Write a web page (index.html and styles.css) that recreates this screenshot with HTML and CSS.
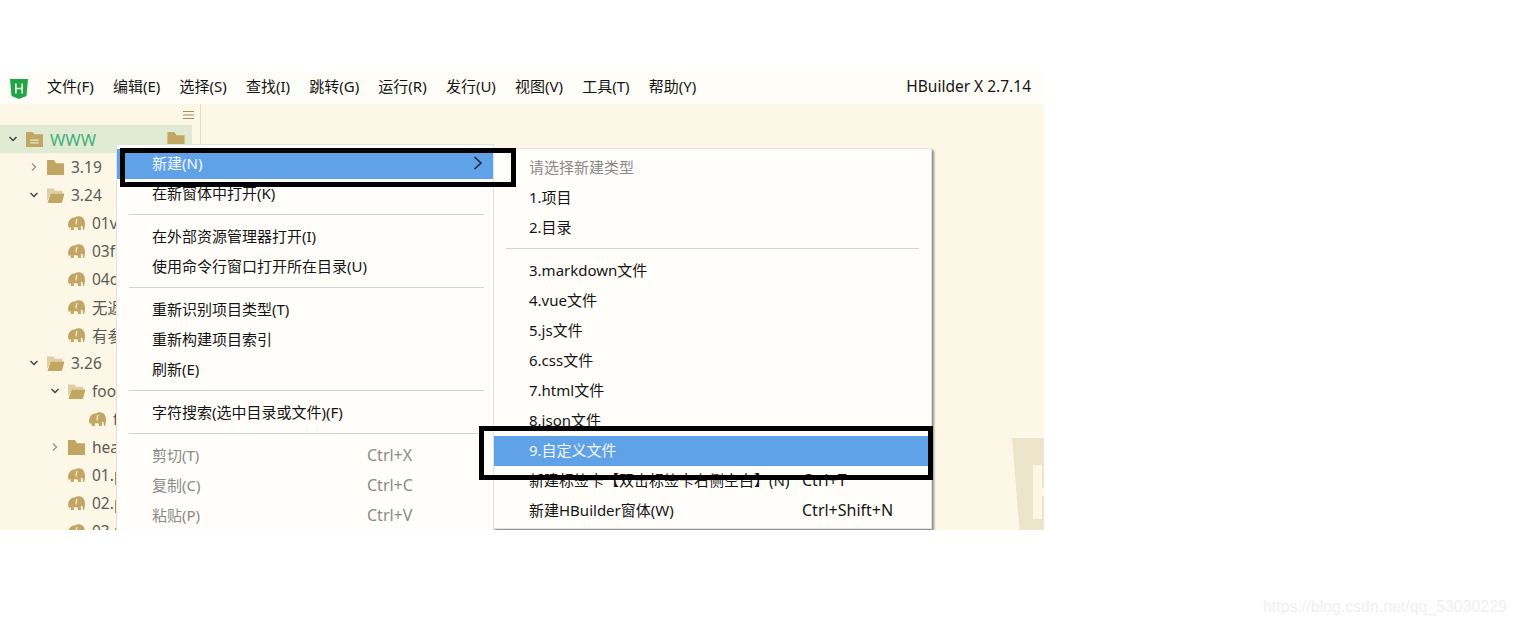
FILE: index.html
```html
<!DOCTYPE html>
<html lang="zh-CN">
<head>
<meta charset="utf-8">
<title>HBuilder X</title>
<link rel="stylesheet" href="styles.css">
</head>
<body>
<svg class="defs" width="0" height="0" aria-hidden="true">
  <symbol id="folder" viewBox="0 0 16 14"><path d="M0 0h6.500l2 3H16v11H0z"/></symbol>
  <symbol id="folder-open" viewBox="0 0 16 14"><path d="M0 .5h6l2 2h6.500v2.500H3.500L1 11H0z" opacity=".5"/><path d="M3.500 5H16.500L14 14H.5z"/></symbol>
  <symbol id="project" viewBox="0 0 16 14"><path fill-rule="evenodd" d="M0 0h6l2 2h8v12H0zM4 7v1.200h8V7zm0 2.600v1.200h8V9.600z"/></symbol>
  <symbol id="php" viewBox="0 0 16 14"><path fill-rule="evenodd" d="M0 9C0 4 3 1 7 1c1-.7 3-1 4.500-.5C14.500 1 16 4 16 7.500c0 2-.2 4-1 5.500h-1l-.3-3.500-1.500-.5V13H9.500L9 10.500H5.500V13h-3v-3L1 11.500zM8.300 2.500C7.200 4 7 6 7.200 8l1-.1C8 6 8.300 4.300 9.200 3z"/></symbol>
</svg>
<div class="app">
  <header class="menubar">
    <svg class="logo" viewBox="0 0 18 20" width="18" height="20"><path class="logo-shield" d="M0 0h18l-1.500 17L9 20l-7.500-3z"/><path class="logo-h" d="M5 4.500h1.700v4.300h4.600V4.500H13v10h-1.700v-4.200H6.700v4.200H5z"/></svg>
    <nav class="menus">
      <span>文件(F)</span><span>编辑(E)</span><span>选择(S)</span><span>查找(I)</span><span>跳转(G)</span><span>运行(R)</span><span>发行(U)</span><span>视图(V)</span><span>工具(T)</span><span>帮助(Y)</span>
    </nav>
    <span class="version">HBuilder X 2.7.14</span>
  </header>
  <main class="main">
    <aside class="sidebar">
      <div class="side-head">
        <svg class="burger" viewBox="0 0 11 8" width="11" height="8"><path d="M0 .5h11M0 4h11M0 7.500h11"/></svg>
      </div>
      <ul class="tree">
        <li class="row d0 active"><svg class="chev" viewBox="0 0 16 16"><path d="M4.500 6l3.500 3.500L11.500 6"/></svg><svg class="ico"><use href="#project"/></svg><span class="green">WWW</span><svg class="ico end"><use href="#folder"/></svg></li>
        <li class="row d1"><svg class="chev light" viewBox="0 0 16 16"><path d="M6 4.500L9.500 8 6 11.500"/></svg><svg class="ico"><use href="#folder"/></svg><span>3.19</span></li>
        <li class="row d1"><svg class="chev" viewBox="0 0 16 16"><path d="M4.500 6l3.500 3.500L11.500 6"/></svg><svg class="ico"><use href="#folder-open"/></svg><span>3.24</span></li>
        <li class="row d2 leaf"><svg class="ico"><use href="#php"/></svg><span>01v</span></li>
        <li class="row d2 leaf"><svg class="ico"><use href="#php"/></svg><span>03f</span></li>
        <li class="row d2 leaf"><svg class="ico"><use href="#php"/></svg><span>04c</span></li>
        <li class="row d2 leaf"><svg class="ico"><use href="#php"/></svg><span>无返</span></li>
        <li class="row d2 leaf"><svg class="ico"><use href="#php"/></svg><span>有参</span></li>
        <li class="row d1"><svg class="chev" viewBox="0 0 16 16"><path d="M4.500 6l3.500 3.500L11.500 6"/></svg><svg class="ico"><use href="#folder-open"/></svg><span>3.26</span></li>
        <li class="row d2"><svg class="chev" viewBox="0 0 16 16"><path d="M4.500 6l3.500 3.500L11.500 6"/></svg><svg class="ico"><use href="#folder-open"/></svg><span>foo</span></li>
        <li class="row d3 leaf"><svg class="ico"><use href="#php"/></svg><span>f</span></li>
        <li class="row d2"><svg class="chev light" viewBox="0 0 16 16"><path d="M6 4.500L9.500 8 6 11.500"/></svg><svg class="ico"><use href="#folder"/></svg><span>hea</span></li>
        <li class="row d2 leaf"><svg class="ico"><use href="#php"/></svg><span>01.p</span></li>
        <li class="row d2 leaf"><svg class="ico"><use href="#php"/></svg><span>02.p</span></li>
        <li class="row d2 leaf"><svg class="ico"><use href="#php"/></svg><span>03.p</span></li>
      </ul>
    </aside>
    <section class="editor"></section>
  </main>

  <svg class="bg-logo" viewBox="0 0 32 92" width="32" height="92"><path class="bg-shield" d="M0 0h32v92H7.500z"/><path class="bg-h" d="M21 27h9v23h2v8h-2v23h-9z"/></svg>

  <div class="menu menu-main">
    <div class="item hot"><span class="label">新建(N)</span><svg class="arrow" viewBox="0 0 10 14" width="10" height="14"><path d="M1.500 1l6.500 6-6.500 6"/></svg></div>
    <div class="item"><span class="label">在新窗体中打开(K)</span></div>
    <hr class="sep">
    <div class="item"><span class="label">在外部资源管理器打开(I)</span></div>
    <div class="item"><span class="label">使用命令行窗口打开所在目录(U)</span></div>
    <hr class="sep">
    <div class="item"><span class="label">重新识别项目类型(T)</span></div>
    <div class="item"><span class="label">重新构建项目索引</span></div>
    <div class="item"><span class="label">刷新(E)</span></div>
    <hr class="sep">
    <div class="item"><span class="label">字符搜索(选中目录或文件)(F)</span></div>
    <hr class="sep">
    <div class="item off"><span class="label">剪切(T)</span><span class="key">Ctrl+X</span></div>
    <div class="item off"><span class="label">复制(C)</span><span class="key">Ctrl+C</span></div>
    <div class="item off"><span class="label">粘贴(P)</span><span class="key">Ctrl+V</span></div>
  </div>

  <div class="menu menu-sub">
    <div class="item off"><span class="label">请选择新建类型</span></div>
    <div class="item"><span class="label">1.项目</span></div>
    <div class="item"><span class="label">2.目录</span></div>
    <hr class="sep">
    <div class="item"><span class="label">3.markdown文件</span></div>
    <div class="item"><span class="label">4.vue文件</span></div>
    <div class="item"><span class="label">5.js文件</span></div>
    <div class="item"><span class="label">6.css文件</span></div>
    <div class="item"><span class="label">7.html文件</span></div>
    <div class="item"><span class="label">8.json文件</span></div>
    <div class="item hot"><span class="label">9.自定义文件</span></div>
    <div class="item"><span class="label">新建标签卡【双击标签卡右侧空白】(N)</span><span class="key">Ctrl+T</span></div>
    <div class="item"><span class="label">新建HBuilder窗体(W)</span><span class="key">Ctrl+Shift+N</span></div>
  </div>

  <div class="mark mark-new"></div>
  <div class="mark mark-custom"></div>
</div>
<div class="watermark">https://blog.csdn.net/qq_53030229</div>
</body>
</html>
```
FILE: styles.css
```css
* { box-sizing: border-box; }
html, body { margin: 0; padding: 0; height: 100%; overflow: hidden; }
body {
  background: #fff;
  padding-top: 72px;
  font-family: "Noto Sans", "Noto Sans CJK SC", sans-serif;
  font-size: 15px;
  color: #141414;
  position: relative;
}
.defs { position: absolute; }

.app {
  position: relative;
  width: 1044px;
  height: 458px;
  overflow: hidden;
  display: flex;
  flex-direction: column;
  background: #fdf7e7;
}
.menubar {
  height: 32px;
  flex: none;
  display: flex;
  align-items: center;
  padding: 0 13px 0 10px;
  background: #fffdf8;
}
.logo { flex: none; margin-top: 1px; }
.logo-shield { fill: #1fa543; }
.logo-h { fill: #e8f7ea; }
.menus { display: flex; gap: 19.200px; margin-left: 19px; flex: 1; padding-bottom: 5px; }
.version { font-size: 15.500px; padding-bottom: 5px; }

.main { flex: 1; display: flex; min-height: 0; }
.sidebar {
  width: 201px;
  flex: none;
  border-right: 1px solid #e9dcb9;
  display: flex;
  flex-direction: column;
  padding-right: 8px;
}
.side-head {
  height: 21px;
  flex: none;
  display: flex;
  justify-content: flex-end;
  align-items: center;
  margin-right: -2px;
}
.burger { stroke: #a98f4f; stroke-width: 1; fill: none; }
.tree { list-style: none; margin: 0; padding: 0; }
.row {
  height: 28px;
  display: flex;
  align-items: center;
  font-size: 15.500px;
  color: #5a5a55;
}
.row.active { background: #e1ebd4; }
.d0 { padding-left: 5px; }
.d1 { padding-left: 26px; }
.d2 { padding-left: 47px; }
.d2.leaf { padding-left: 68px; }
.d3.leaf { padding-left: 89px; }
.chev { width: 16px; height: 16px; flex: none; margin-right: 5px; fill: none; stroke: #444; stroke-width: 1.500; }
.chev.light { stroke: #a39a86; }
.ico { width: 17px; height: 15px; flex: none; margin-right: 7px; fill: #c2a764; }
.ico.end { margin: 0 7px 0 auto; width: 18px; }
.green { color: #45b07c; font-size: 16.500px; }
.editor { flex: 1; }

.bg-logo { position: absolute; left: 1012px; top: 366px; }
.bg-shield { fill: #ece5cb; }
.bg-h { fill: #fdf7e7; }

.menu {
  position: absolute;
  background: #fffefa;
  border: 1px solid #e2e2e2;
  padding-top: 4px;
}
.menu-main { left: 116px; top: 72px; width: 378px; height: 420px; }
.menu-sub {
  left: 493px;
  top: 76px;
  width: 439px;
  height: 381px;
  box-shadow: 2px 2px 2px #8c8c8c;
}
.item {
  height: 30px;
  display: flex;
  align-items: center;
  padding-left: 35px;
  padding-bottom: 3px;
  white-space: nowrap;
}
.menu-main .label { width: 215px; }
.menu-sub .label { width: 273px; }
.key { font-size: 16px; }
.item.hot { background: #5fa2e8; color: #f4f8fd; position: relative; }
.item.off { color: #8a8a8a; }
.arrow { fill: none; stroke: #1d2430; stroke-width: 1.600; flex: none; margin-left: 106px; }
.sep { height: 1px; border: 0; background: #d2d2d2; margin: 5px 9px 7px 12px; }
.menu-sub .sep { margin: 5px 12px 7px 12px; }

.mark { position: absolute; border: 5px solid #000; }
.mark-new { left: 120px; top: 76px; width: 396px; height: 39px; }
.mark-custom { left: 479px; top: 354px; width: 454px; height: 54px; }

.watermark {
  position: absolute;
  left: 1263px;
  top: 598px;
  font-family: "Liberation Sans", Arial, sans-serif;
  font-size: 15.900px;
  color: #efefef;
  white-space: nowrap;
}
```
